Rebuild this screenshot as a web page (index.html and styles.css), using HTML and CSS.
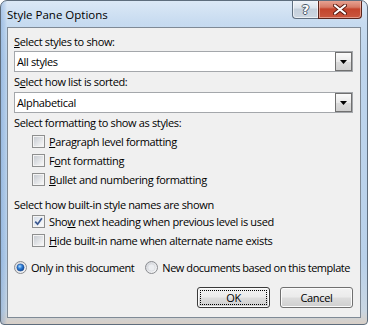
FILE: index.html
```html
<!DOCTYPE html>
<html>
<head>
<meta charset="utf-8">
<link rel="stylesheet" href="styles.css">
</head>
<body>
<div class="window">
  <div class="titlebar">
    <span class="title">Style Pane Options</span>
    <div class="caption-buttons">
      <div class="cbtn help"><span class="help-glyph">?</span></div>
      <div class="cbtn close">
        <svg width="14" height="11" viewBox="0 0 14 11"><path d="M2 1.5 L12 9.5 M12 1.5 L2 9.5" stroke="#5a1a10" stroke-width="4" stroke-linecap="round"/><path d="M2 1.5 L12 9.5 M12 1.5 L2 9.5" stroke="#ffffff" stroke-width="2.2" stroke-linecap="round"/></svg>
      </div>
    </div>
  </div>
  <div class="frame-body">
    <div class="client">
      <div class="label"><u>S</u>elect styles to show:</div>
      <div class="combo"><span class="combo-text">All styles</span><span class="drop"><svg width="7" height="4" viewBox="0 0 7 4"><polygon points="0,0 7,0 3.5,4" fill="#000"/></svg></span></div>
      <div class="label gap"><span>S<u>e</u>lect how list is sorted:</span></div>
      <div class="combo"><span class="combo-text">Alphabetical</span><span class="drop"><svg width="7" height="4" viewBox="0 0 7 4"><polygon points="0,0 7,0 3.5,4" fill="#000"/></svg></span></div>
      <div class="label gap">Select formatting to show as styles:</div>
      <div class="check-group first">
        <div class="check-row"><span class="checkbox"></span><span><u>P</u>aragraph level formatting</span></div>
        <div class="check-row"><span class="checkbox"></span><span>F<u>o</u>nt formatting</span></div>
        <div class="check-row"><span class="checkbox"></span><span><u>B</u>ullet and numbering formatting</span></div>
      </div>
      <div class="label section">Select how built-in style names are shown</div>
      <div class="check-group second">
        <div class="check-row"><span class="checkbox checked"><svg width="9" height="9" viewBox="0 0 9 9"><path d="M1.2 4.6 L3.6 7.2 L7.9 1.2" fill="none" stroke="#3d5a92" stroke-width="1.7"/></svg></span><span>Sho<u>w</u> next heading when previous level is used</span></div>
        <div class="check-row"><span class="checkbox"></span><span><u>H</u>ide built-in name when alternate name exists</span></div>
      </div>
      <div class="radio-row">
        <div class="radio-item">
          <svg class="radio" width="13" height="13" viewBox="0 0 13 13">
            <defs>
              <linearGradient id="ring1" x1="0" y1="0" x2="1" y2="1"><stop offset="0" stop-color="#d4d7dc"/><stop offset="1" stop-color="#fbfbfb"/></linearGradient>
              <radialGradient id="dot1" cx="0.4" cy="0.35" r="0.7"><stop offset="0" stop-color="#b5e0ff"/><stop offset="0.45" stop-color="#2f7fd8"/><stop offset="1" stop-color="#0b3f8e"/></radialGradient>
            </defs>
            <circle cx="6.5" cy="6.5" r="6" fill="url(#ring1)" stroke="#8a8c90" stroke-width="1"/>
            <circle cx="6.5" cy="6.5" r="3.6" fill="url(#dot1)" stroke="#1d4f96" stroke-width="0.6"/>
          </svg>
          <span>Only in this document</span>
        </div>
        <div class="radio-item second-radio">
          <svg class="radio" width="13" height="13" viewBox="0 0 13 13">
            <defs>
              <linearGradient id="ring2" x1="0" y1="0" x2="1" y2="1"><stop offset="0" stop-color="#cfd2d8"/><stop offset="1" stop-color="#fbfbfb"/></linearGradient>
            </defs>
            <circle cx="6.5" cy="6.5" r="6" fill="url(#ring2)" stroke="#8a8c90" stroke-width="1"/>
            <circle cx="6.5" cy="6.5" r="3.6" fill="#eceef1" stroke="#d2d5da" stroke-width="0.6"/>
          </svg>
          <span>New documents based on this template</span>
        </div>
      </div>
      <div class="buttons">
        <div class="btn default"><span class="focus">OK</span></div>
        <div class="btn"><span class="plain">Cancel</span></div>
      </div>
    </div>
  </div>
</div>
</body>
</html>
```
FILE: styles.css
```css
body {
  margin: 0;
  font-family: "Open Sans", "Noto Sans", sans-serif;
  font-size: 11px;
  letter-spacing: -0.35px;
  color: #000;
  background: #ffffff;
}
.window {
  width: 368px;
  height: 325px;
  box-sizing: border-box;
  border: 1px solid #5e6d7d;
  border-radius: 7px 7px 4px 4px;
  background:
    linear-gradient(90deg, rgba(90,140,205,0.35) 0px, rgba(90,140,205,0.15) 4px, rgba(90,140,205,0) 6px),
    linear-gradient(180deg, #dbe8f6 0px, #c7dbf0 22px, #bed5ed 60px, #b9d1ea 260px, #c9d6e2 310px, #d8cfc6 323px);
  display: flex;
  flex-direction: column;
  overflow: hidden;
}
.titlebar {
  height: 26px;
  flex: none;
  display: flex;
  align-items: flex-start;
  padding-left: 6px;
}
.title {
  margin-top: 6px;
  line-height: 16px;
  font-size: 11.5px;
  letter-spacing: 0;
}
.caption-buttons {
  margin-left: auto;
  margin-right: 5px;
  margin-top: -1px;
  display: flex;
}
.cbtn {
  height: 19px;
  box-sizing: border-box;
  display: flex;
  align-items: center;
  justify-content: center;
}
.help {
  width: 26px;
  border: 1px solid #5f6f80;
  border-top: none;
  border-right: none;
  border-radius: 0 0 0 4px;
  background: linear-gradient(180deg, #f3f6fa 0%, #dbe3ec 45%, #c4cfdb 50%, #cdd7e2 100%);
  box-shadow: inset 0 0 0 1px rgba(255,255,255,0.6);
}
.help-glyph {
  font-family: "DejaVu Sans", sans-serif;
  font-weight: bold;
  font-size: 13px;
  line-height: 13px;
  letter-spacing: 0;
  color: #ffffff;
  text-shadow: 1px 0 0 #4a5868, -1px 0 0 #4a5868, 0 1px 0 #4a5868, 0 -1px 0 #4a5868;
}
.close {
  width: 44px;
  border: 1px solid #5a241c;
  border-top: none;
  border-radius: 0 0 4px 0;
  background: linear-gradient(180deg, #e9a898 0%, #d67a66 40%, #c4442c 50%, #c9573f 100%);
  box-shadow: inset 0 0 0 1px rgba(255,220,210,0.5);
}
.frame-body {
  flex: 1;
  min-width: 0;
  display: flex;
  padding: 0 6px 6px 6px;
}
.client {
  flex: 1;
  min-width: 0;
  overflow: hidden;
  border: 1px solid #7f8a96;
  background: #f0f0f0;
  padding: 6px 7px 0 6px;
  display: flex;
  flex-direction: column;
}
.label {
  line-height: 16px;
  height: 16px;
  white-space: nowrap;
}
.label.gap {
  margin-top: 2px;
}
.label.section {
  margin-top: 8px;
}
.combo {
  margin-top: 1px;
  height: 21px;
  box-sizing: border-box;
  border: 1px solid #a4a7ab;
  background: #ffffff;
  display: flex;
  align-items: stretch;
}
.label.gap + .combo {
  margin-top: 2px;
}
.combo-text {
  flex: 1;
  padding-left: 2px;
  line-height: 19px;
}
.drop {
  width: 17px;
  box-sizing: border-box;
  border: 1px solid #707070;
  background: linear-gradient(180deg, #fbfbfb 0%, #eaeaea 50%, #dcdcdc 51%, #d0d0d0 100%);
  display: flex;
  align-items: center;
  justify-content: center;
}
.check-group {
  display: flex;
  flex-direction: column;
  padding-left: 18px;
}
.check-group.first {
  margin-top: 1px;
}
.check-group.second {
  margin-top: -1px;
}
.check-row {
  height: 19px;
  display: flex;
  align-items: center;
  gap: 4px;
  white-space: nowrap;
}
.checkbox {
  width: 13px;
  height: 13px;
  box-sizing: border-box;
  border: 1px solid #8e8f8f;
  background: #f4f4f4;
  display: flex;
  align-items: center;
  justify-content: center;
  flex: none;
}
.checkbox::before {
  content: "";
  width: 9px;
  height: 9px;
  background: linear-gradient(135deg, #c8ccd2 0%, #e2e4e7 55%, #f7f7f7 100%);
}
.checkbox.checked::before {
  display: none;
}
.checkbox.checked svg {
  background: linear-gradient(135deg, #d7dfea 0%, #eef1f5 60%, #fafafa 100%);
}
.radio-row {
  margin-top: 9px;
  height: 17px;
  display: flex;
  align-items: center;
  white-space: nowrap;
  letter-spacing: -0.45px;
}
.radio-item {
  display: flex;
  align-items: center;
  gap: 4px;
}
.radio {
  flex: none;
}
.second-radio {
  margin-left: 11px;
}
.buttons {
  margin-top: 11px;
  display: flex;
  justify-content: flex-end;
  gap: 10px;
}
.btn {
  width: 73px;
  height: 21px;
  box-sizing: border-box;
  border: 1px solid #707070;
  border-radius: 3px;
  background: linear-gradient(180deg, #f2f2f2 0%, #ebebeb 48%, #dddddd 52%, #cfcfcf 100%);
  box-shadow: inset 0 0 0 1px #fbfbfb;
  display: flex;
  padding: 2px;
}
.btn.default {
  border-color: #3a3a3a;
}
.focus, .plain {
  flex: 1;
  display: flex;
  align-items: center;
  justify-content: center;
  line-height: 13px;
}
.focus {
  border: 1px dotted #000;
}
.plain {
  border: 1px solid transparent;
}
```
